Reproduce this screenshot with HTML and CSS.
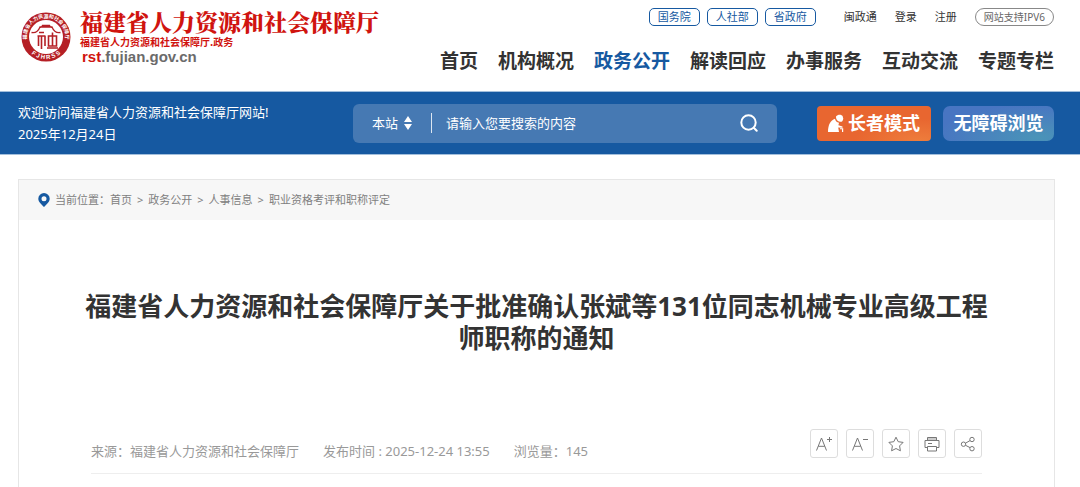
FILE: index.html
```html
<!DOCTYPE html>
<html lang="zh-CN">
<head>
<meta charset="utf-8">
<title>福建省人力资源和社会保障厅</title>
<link rel="stylesheet" href="styles.css">
</head>
<body>
<header class="header wrap">
  <a class="brand" href="#">
    <svg class="seal" viewBox="0 0 50 50" aria-hidden="true">
      <defs>
        <path id="arc-top" d="M7.200 32.500A19.300 19.300 0 1 1 42.800 32.500"/>
        <path id="arc-bottom" d="M4.500 34A22.600 22.600 0 0 0 45.500 34"/>
      </defs>
      <circle cx="25" cy="25" r="24.500" fill="#b51f25"/>
      <circle cx="25" cy="25" r="17" fill="#fff"/>
      <text class="seal-text"><textPath href="#arc-top" startOffset="50%" text-anchor="middle">福建省人力资源和社会保障厅</textPath></text>
      <text class="seal-text seal-latin"><textPath href="#arc-bottom" startOffset="50%" text-anchor="middle">F J H R S S</textPath></text>
      <g fill="none" stroke="#b51f25" stroke-width="1.600">
        <path d="M10.500 20.500c4 .8 7-1.800 8.500-5.500h12c1.500 3.700 4.500 6.300 8.500 5.500M19 15.500c1.500 0 2-1 2.500-2h7c.5 1 1 2 2.500 2" stroke-width="1.300"/>
        <path d="M18 20.500h5M16.500 24h8M17.500 24v10M20.500 24v13M24 24v10M27.500 24h8v10h-8zM31.500 20.500v13.500M26 36h11"/>
      </g>
    </svg>
    <span class="brand-text">
      <span class="brand-name">福建省人力资源和社会保障厅</span>
      <span class="brand-sub">福建省人力资源和社会保障厅.政务</span>
      <span class="brand-url"><b>rst</b>.fujian.gov.cn</span>
    </span>
  </a>
  <div class="header-right">
    <div class="toplinks">
      <div class="pills">
        <a class="pill" href="#">国务院</a>
        <a class="pill" href="#">人社部</a>
        <a class="pill" href="#">省政府</a>
      </div>
      <a class="first-link" href="#">闽政通</a>
      <a href="#">登录</a>
      <a href="#">注册</a>
      <a class="ipv6" href="#">网站支持IPV6</a>
    </div>
    <nav class="nav">
      <a href="#">首页</a>
      <a href="#">机构概况</a>
      <a class="active" href="#">政务公开</a>
      <a href="#">解读回应</a>
      <a href="#">办事服务</a>
      <a href="#">互动交流</a>
      <a href="#">专题专栏</a>
    </nav>
  </div>
</header>

<section class="banner">
  <div class="banner-inner wrap">
    <div class="welcome">欢迎访问福建省人力资源和社会保障厅网站!<br>2025年12月24日</div>
    <form class="search">
      <select class="scope" aria-label="搜索范围"><option>本站</option></select>
      <svg class="sort" viewBox="0 0 8 14" aria-hidden="true"><path d="M4 0l4 6H0zM4 14l4-6H0z" fill="#fff"/></svg>
      <input class="query" type="text" placeholder="请输入您要搜索的内容" aria-label="搜索内容">
      <button class="go" type="button" aria-label="搜索">
        <svg viewBox="0 0 18 18" fill="none" stroke="#fff" stroke-width="2" stroke-linecap="round"><circle cx="8.500" cy="8.500" r="7.200"/><path d="M14 14l2.700 2.700"/></svg>
      </button>
    </form>
    <button class="mode elder" type="button">
      <svg viewBox="0 0 16 18" fill="#fff" aria-hidden="true"><path d="M8 2.500C9.500.3 13 .1 14.400 1.800c.7.900.3 1.500.8 2.500.3.700-.2 1-.3 1.600-.3 1.500-1.500 2-3 1.800C9.800 7.400 8 6 8 2.500z"/><path d="M7 4.800c.4 2.200 1.800 3.500 4 4l-.6 2.400 4.100 1.300v1.300l-4.300-.3L11 18H0C0 11 2.500 6.300 7 4.800z"/><path d="M12 14.200h3.200V18H14v-2.800h-2z"/></svg>
      <span>长者模式</span>
    </button>
    <button class="mode barrier-free" type="button">无障碍浏览</button>
  </div>
</section>

<main class="card">
  <nav class="crumbs" aria-label="当前位置">
    <svg class="pin" viewBox="0 0 12 14" aria-hidden="true"><path fill="#1659a1" fill-rule="evenodd" d="M6 0a5.700 5.700 0 0 1 5.700 5.700C11.700 9 8 11.800 6 14 4 11.800.3 9 .3 5.700A5.700 5.700 0 0 1 6 0zm0 3.200a2.500 2.500 0 1 0 0 5 2.500 2.500 0 0 0 0-5z"/></svg>
    <span>当前位置：</span>
    <a href="#">首页</a><i>&gt;</i><a href="#">政务公开</a><i>&gt;</i><a href="#">人事信息</a><i>&gt;</i><a href="#">职业资格考评和职称评定</a>
  </nav>
  <article class="article">
    <h1>福建省人力资源和社会保障厅关于批准确认张斌等131位同志机械专业高级工程<br>师职称的通知</h1>
    <div class="meta">
      <span>来源：福建省人力资源和社会保障厅</span>
      <span>发布时间 : 2025-12-24 13:55</span>
      <span>浏览量：145</span>
      <div class="tools">
        <button type="button" aria-label="放大字号"><svg viewBox="0 0 18 18"><path d="M1.500 15.500L6.500 3l5 12.500M3.300 11.300h6.400M12 4.500h5M14.500 2v5"/></svg></button>
        <button type="button" aria-label="缩小字号"><svg viewBox="0 0 18 18"><path d="M1.500 15.500L6.500 3l5 12.500M3.300 11.300h6.400M12 4.500h5"/></svg></button>
        <button type="button" aria-label="收藏"><svg viewBox="0 0 18 18"><path d="M9 2.200l2.200 4.500 4.900.7-3.500 3.500.8 4.900L9 13.500l-4.400 2.300.8-4.900-3.500-3.500 4.900-.7z"/></svg></button>
        <button type="button" aria-label="打印"><svg viewBox="0 0 18 18"><path d="M4.500 5.500v-3h9v3z" fill="#ccc"/><path d="M4.500 12.500H2v-7h14v7h-2.500M4.500 11.500h9v4.500h-9zM5 8.500h4"/></svg></button>
        <button type="button" aria-label="分享"><svg viewBox="0 0 18 18"><circle cx="4.500" cy="9.200" r="2.200"/><circle cx="13" cy="4.500" r="2.200"/><circle cx="13" cy="13.700" r="2.200"/><path d="M6.500 8.200L11 5.600M6.500 10.300l4.500 2.300"/></svg></button>
      </div>
    </div>
  </article>
</main>
</body>
</html>
```
FILE: styles.css
```css
* { box-sizing: border-box; }
html, body { height: 100%; }
body {
  margin: 0;
  display: flex;
  flex-direction: column;
  background: #fff;
  color: #333;
  font: 13px/22px "Noto Sans", "Noto Sans CJK SC", sans-serif;
}
a { color: inherit; text-decoration: none; }
button, input, select { font: inherit; color: inherit; border: 0; background: none; padding: 0; margin: 0; }
svg { display: block; flex: none; }
.wrap { padding-left: 18px; padding-right: 26px; }

.header { display: flex; justify-content: space-between; padding-top: 8px; padding-bottom: 15px; }
.brand { display: flex; gap: 9px; padding-left: 3px; }
.seal { width: 50px; height: 50px; margin-top: 4px; }
.seal-text { font: 700 5px "Noto Sans CJK SC", sans-serif; fill: #fff; }
.seal-latin { font-family: "Liberation Sans", sans-serif; font-size: 6px; }
.brand-text { display: flex; flex-direction: column; white-space: nowrap; }
.brand-name { font: 900 23px/28px "Noto Serif CJK SC", "Noto Sans CJK SC", serif; color: #d0140f; }
.brand-sub { font: 700 10px/12px "Noto Sans CJK SC", sans-serif; color: #d0140f; }
.brand-url { padding-left: 2px; font: 700 15px/18px "Liberation Sans", sans-serif; color: #6b6b6b; }
.brand-url b { color: #d0140f; }

.header-right { display: flex; flex-direction: column; align-items: flex-end; gap: 20px; }
.toplinks { display: flex; align-items: center; gap: 18px; font-size: 11px; line-height: 16px; }
.pills { display: flex; gap: 7px; }
.pill { padding: 0 8px; border: 1px solid #1659a1; border-radius: 5px; color: #1659a1; }
.first-link { margin-left: 10px; }
.ipv6 { padding: 0 8px; border: 1px solid #888; border-radius: 9px; color: #666; font-size: 10px; }
.nav { display: flex; gap: 20px; font-size: 19px; font-weight: 700; line-height: 30px; }
.nav .active { color: #1659a1; }

.banner { border: solid #a3bfdc; border-width: 1px 0; background: #1659a1; color: #fff; }
.banner-inner { display: flex; align-items: center; padding-top: 9px; padding-bottom: 9px; }
.welcome { flex: 0 0 335px; }
.search {
  display: flex;
  align-items: center;
  flex: 1;
  height: 39px;
  padding: 0 19px;
  border-radius: 6px;
  background: #4679b3;
}
.scope { appearance: none; width: 32px; height: 22px; }
.sort { width: 8px; height: 14px; }
.query {
  flex: 1;
  min-width: 0;
  height: 20px;
  margin-left: 19px;
  padding-left: 14px;
  border-left: 1px solid #dce6f1;
}
.query::placeholder { color: #fff; opacity: 1; }
.go svg { width: 18px; height: 18px; }
.mode {
  display: flex;
  align-items: center;
  justify-content: center;
  gap: 4px;
  height: 35px;
  font-size: 18px;
  font-weight: 700;
  white-space: nowrap;
}
.elder { width: 114px; margin-left: 40px; border-radius: 4px; background: radial-gradient(ellipse at 90% 100%, #ee7d3c, #e86630 45%); }
.elder svg { width: 16px; height: 18px; }
.barrier-free { width: 111px; margin-left: 12px; border-radius: 7px; background: radial-gradient(ellipse at 85% 90%, #4a94b8, #4875c2 75%); }

.card { flex: 1; margin: 24px 25px 0 18px; border: solid #e6e6e6; border-width: 1px 1px 0; }
.crumbs {
  display: flex;
  align-items: center;
  height: 40px;
  padding-left: 19px;
  background: #f7f7f7;
  color: #808080;
  font-size: 11px;
}
.pin { width: 12px; height: 14px; margin-right: 5px; }
.crumbs i { padding: 0 5px; font-style: normal; }
.article { padding: 70px 72px 0; }
h1 {
  margin: 0 -8px;
  color: #333;
  font-size: 26px;
  font-weight: 700;
  line-height: 32px;
  text-align: center;
}
.meta {
  display: flex;
  align-items: flex-start;
  gap: 24px;
  margin-top: 75px;
  padding-bottom: 11px;
  border-bottom: 1px solid #eee;
  color: #999;
}
.meta span { margin-top: 11px; }
.tools { display: flex; gap: 8px; margin-left: auto; }
.tools button { display: grid; place-items: center; width: 28px; height: 29px; border: 1px solid #ddd; border-radius: 3px; }
.tools svg { width: 18px; height: 18px; fill: none; stroke: #777; stroke-width: 1; }
```
